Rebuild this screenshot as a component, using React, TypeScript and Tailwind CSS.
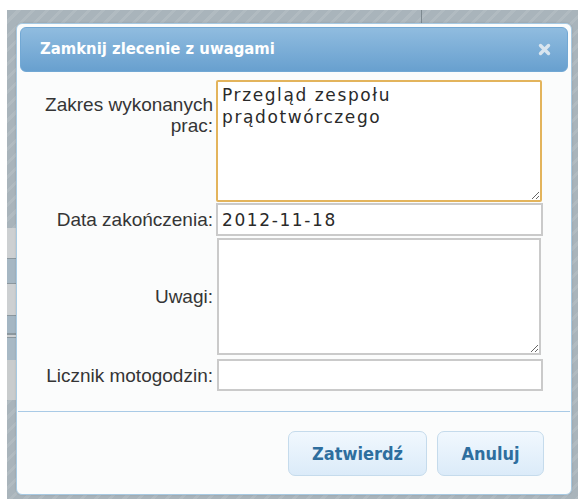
import { useState } from 'react';

const labelCls =
  "w-[193px] shrink-0 text-right font-['Liberation_Sans',Arial,sans-serif] text-[19px] leading-[21px] text-[#353535]";
const fieldCls =
  "block border-2 border-[#cacaca] bg-white px-[4px] font-['DejaVu_Sans',Verdana,sans-serif] text-[17px] tracking-[1.6px] text-[#2a2a2a] outline-none";
const buttonCls =
  "h-[45px] rounded-[7px] border border-[#c5dbec] bg-gradient-to-b from-[#f1f8fe] to-[#dbebf9] font-['DejaVu_Sans_Condensed','DejaVu_Sans',sans-serif] font-stretch-condensed text-[18px] font-bold text-[#2e6e9e]";

// strips of the table that shows through the overlay on the left edge
const pageBands = [
  ['h-[30px]', 'bg-[#cdd0d2]'],
  ['h-[1px]', 'bg-[#8b979e]'],
  ['h-[24px]', 'bg-[#a6b7c3]'],
  ['h-[1px]', 'bg-[#8b979e]'],
  ['h-[31px]', 'bg-[#cdd0d2]'],
  ['h-[1px]', 'bg-[#8b979e]'],
  ['h-[17px]', 'bg-[#a4b6c3]'],
  ['h-[2px]', 'bg-[#8b979e]'],
  ['h-[2px]', 'bg-[#cdd0d2]'],
  ['h-[1px]', 'bg-[#8b979e]'],
  ['h-[22px]', 'bg-[#a8b9c5]'],
  ['h-[40px]', 'bg-[#c9cccd]'],
];

function CloseIcon() {
  return (
    <svg width="13" height="13" viewBox="0 0 13 13" className="text-[#d9e5ef]">
      <path d="M2.5 2.5 L10.5 10.5 M10.5 2.5 L2.5 10.5" stroke="currentColor" strokeWidth="3.4" strokeLinecap="round" />
    </svg>
  );
}

export default function App() {
  const [works, setWorks] = useState('Przegląd zespołu\nprądotwórczego');
  const [date, setDate] = useState('2012-11-18');
  const [notes, setNotes] = useState('');
  const [hours, setHours] = useState('');

  return (
    <div className="relative h-[499px] w-[578px] overflow-hidden bg-white">
      {/* page under the modal overlay */}
      <div className="flex h-full pl-[7px] pt-[10px]">
        <div className="flex w-full bg-[repeating-linear-gradient(135deg,#a9b4bb_0px,#a9b4bb_7px,#b1bbc1_7px,#b1bbc1_10px)]">
          <div className="flex w-[9px] flex-col pt-[218px]">
            {pageBands.map(([h, bg], i) => (
              <div key={i} className={`${h} ${bg}`} />
            ))}
          </div>
          <div className="ml-[405px] h-[13px] w-px bg-[#7d8990]" />
        </div>
      </div>

      <div className="absolute left-[16px] top-[23px] flex h-[472px] w-[556px] flex-col rounded-[6px] border border-[#a6c9e2] bg-[#fbfcfc] p-[3px] shadow-[0_0_2px_rgba(0,0,0,0.15)]">
        <div className="flex h-[45px] items-center justify-between rounded-[6px] border border-[#72a8d4] bg-gradient-to-b from-[#90bcdf] to-[#68a0cf] pl-[19px] pr-[16px]">
          <span className="font-['DejaVu_Sans_Condensed','DejaVu_Sans',sans-serif] font-stretch-condensed text-[16.5px] font-bold text-white">
            Zamknij zlecenie z uwagami
          </span>
          <CloseIcon />
        </div>

        <div className="mt-[8px] flex flex-col">
          <div className="flex items-start gap-[3px]">
            <label className={`${labelCls} pt-[14px]`}>
              Zakres wykonanych
              <br />
              prac:
            </label>
            <textarea
              value={works}
              onChange={(e) => setWorks(e.target.value)}
              className={`${fieldCls} h-[122px] w-[326px] rounded-[2px] border-[#e3b45c] pt-[2px] leading-[22px]`}
            />
          </div>

          <div className="mt-[1px] flex items-center gap-[3px]">
            <label className={labelCls}>Data zakończenia:</label>
            <input value={date} onChange={(e) => setDate(e.target.value)} className={`${fieldCls} h-[33px] w-[327px]`} />
          </div>

          <div className="mt-[2px] flex items-center gap-[3px]">
            <label className={labelCls}>Uwagi:</label>
            <textarea
              value={notes}
              onChange={(e) => setNotes(e.target.value)}
              className={`${fieldCls} ml-[1px] h-[117px] w-[324px] leading-[22px]`}
            />
          </div>

          <div className="mt-[4px] flex items-center gap-[3px]">
            <label className={labelCls}>Licznik motogodzin:</label>
            <input value={hours} onChange={(e) => setHours(e.target.value)} className={`${fieldCls} ml-[1px] h-[32px] w-[326px]`} />
          </div>
        </div>

        <div className="-mx-[2px] mt-[20px] h-px bg-[#a9cae6]" />

        <div className="mt-[19px] flex justify-end gap-[10px] pr-[24px]">
          <button className={`${buttonCls} w-[139px]`}>Zatwierdź</button>
          <button className={`${buttonCls} w-[107px]`}>Anuluj</button>
        </div>
      </div>
    </div>
  );
}
